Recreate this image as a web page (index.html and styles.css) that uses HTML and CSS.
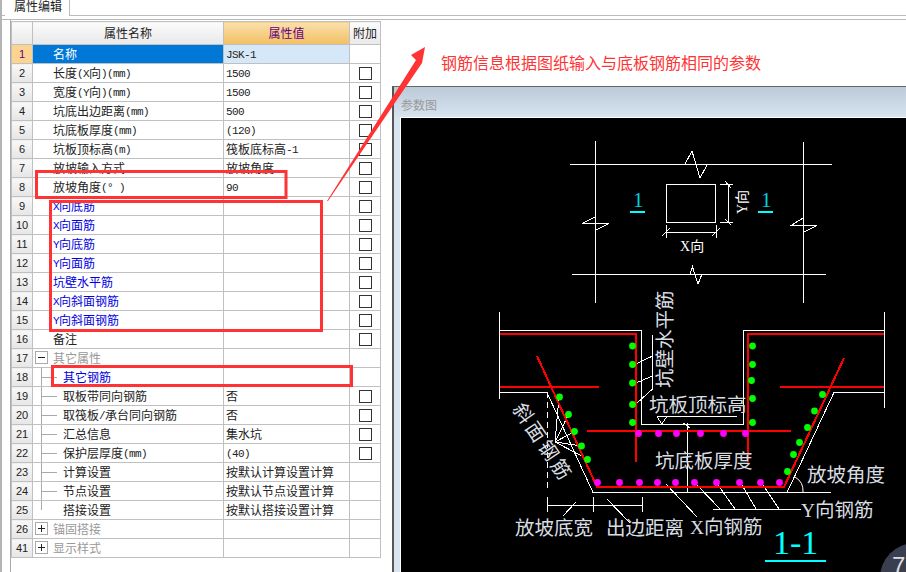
FILE: index.html
```html
<!DOCTYPE html>
<html lang="zh-CN">
<head>
    <meta charset="UTF-8">
    <title>属性编辑</title>
    <link rel="stylesheet" href="styles.css">
</head>
<body>
<div class="window">
    <div class="tabs"><div class="tab">属性编辑</div></div>
    <div class="content">
        <div class="props">
            <table class="grid">
                <colgroup><col class="c-idx"><col class="c-name"><col class="c-val"><col class="c-add"></colgroup>
                <tr class="head">
                    <th></th><th>属性名称</th><th class="active">属性值</th><th>附加</th>
                </tr>
                <tr class="selected"><td class="idx">1</td><td class="name">名称</td><td class="val"><span class="lat">JSK-1</span></td><td></td></tr>
                <tr><td class="idx">2</td><td class="name">长度<span class="lat">(X</span>向<span class="lat">)(mm)</span></td><td class="val"><span class="lat">1500</span></td><td class="add"><i class="check"></i></td></tr>
                <tr><td class="idx">3</td><td class="name">宽度<span class="lat">(Y</span>向<span class="lat">)(mm)</span></td><td class="val"><span class="lat">1500</span></td><td class="add"><i class="check"></i></td></tr>
                <tr><td class="idx">4</td><td class="name">坑底出边距离<span class="lat">(mm)</span></td><td class="val"><span class="lat">500</span></td><td class="add"><i class="check"></i></td></tr>
                <tr><td class="idx">5</td><td class="name">坑底板厚度<span class="lat">(mm)</span></td><td class="val"><span class="lat">(120)</span></td><td class="add"><i class="check"></i></td></tr>
                <tr><td class="idx">6</td><td class="name">坑板顶标高<span class="lat">(m)</span></td><td class="val">筏板底标高<span class="lat">-1</span></td><td class="add"><i class="check"></i></td></tr>
                <tr><td class="idx">7</td><td class="name">放坡输入方式</td><td class="val">放坡角度</td><td class="add"><i class="check"></i></td></tr>
                <tr><td class="idx">8</td><td class="name">放坡角度<span class="lat">(° )</span></td><td class="val"><span class="lat">90</span></td><td class="add"><i class="check"></i></td></tr>
                <tr><td class="idx">9</td><td class="name link"><span class="lat">X</span>向底筋</td><td class="val"></td><td class="add"><i class="check"></i></td></tr>
                <tr><td class="idx">10</td><td class="name link"><span class="lat">X</span>向面筋</td><td class="val"></td><td class="add"><i class="check"></i></td></tr>
                <tr><td class="idx">11</td><td class="name link"><span class="lat">Y</span>向底筋</td><td class="val"></td><td class="add"><i class="check"></i></td></tr>
                <tr><td class="idx">12</td><td class="name link"><span class="lat">Y</span>向面筋</td><td class="val"></td><td class="add"><i class="check"></i></td></tr>
                <tr><td class="idx">13</td><td class="name link">坑壁水平筋</td><td class="val"></td><td class="add"><i class="check"></i></td></tr>
                <tr><td class="idx">14</td><td class="name link"><span class="lat">X</span>向斜面钢筋</td><td class="val"></td><td class="add"><i class="check"></i></td></tr>
                <tr><td class="idx">15</td><td class="name link"><span class="lat">Y</span>向斜面钢筋</td><td class="val"></td><td class="add"><i class="check"></i></td></tr>
                <tr><td class="idx">16</td><td class="name">备注</td><td class="val"></td><td class="add"><i class="check"></i></td></tr>
                <tr><td class="idx">17</td><td class="name group"><i class="toggle minus"></i>其它属性</td><td class="val"></td><td></td></tr>
                <tr><td class="idx">18</td><td class="name child link">其它钢筋</td><td class="val"></td><td></td></tr>
                <tr><td class="idx">19</td><td class="name child">取板带同向钢筋</td><td class="val">否</td><td class="add"><i class="check"></i></td></tr>
                <tr><td class="idx">20</td><td class="name child">取筏板<span class="lat">/</span>承台同向钢筋</td><td class="val">否</td><td class="add"><i class="check"></i></td></tr>
                <tr><td class="idx">21</td><td class="name child">汇总信息</td><td class="val">集水坑</td><td class="add"><i class="check"></i></td></tr>
                <tr><td class="idx">22</td><td class="name child">保护层厚度<span class="lat">(mm)</span></td><td class="val"><span class="lat">(40)</span></td><td class="add"><i class="check"></i></td></tr>
                <tr><td class="idx">23</td><td class="name child">计算设置</td><td class="val">按默认计算设置计算</td><td></td></tr>
                <tr><td class="idx">24</td><td class="name child">节点设置</td><td class="val">按默认节点设置计算</td><td></td></tr>
                <tr><td class="idx">25</td><td class="name child last">搭接设置</td><td class="val">按默认搭接设置计算</td><td></td></tr>
                <tr><td class="idx">26</td><td class="name group"><i class="toggle plus"></i>锚固搭接</td><td class="val"></td><td></td></tr>
                <tr><td class="idx">41</td><td class="name group"><i class="toggle plus"></i>显示样式</td><td class="val"></td><td></td></tr>
            </table>
        </div>
        <div class="side">
            <p class="note">钢筋信息根据图纸输入与底板钢筋相同的参数</p>
            <div class="params">
                <h4>参数图</h4>
                <div class="canvas">
                    <svg class="drawing" width="505" height="454" viewBox="401 118 505 454">
                        <!-- plan view -->
                        <g class="ln">
                            <path d="M595.5 141V303M803.5 142V303M570 164.5H832M572 274.5H826"/>
                            <path d="M685 164L692 151L700 178L707 165M690 274L692.5 267L698 284L702 274"/>
                            <path d="M595 217L582 223.5H609L596 230M803 218L791 225.5H817L804 232"/>
                            <rect x="666.5" y="184.5" width="49" height="38"/>
                            <path d="M666.5 232.5H716M666.5 225V238M716 225V238M662 236L670 228M712 236L720 228"/>
                            <path d="M728.5 184V222M720 184.5H733M720 222.5H733M725 181L731 188M725 219L731 225"/>
                        </g>
                        <text class="t-small" x="680" y="251"><tspan class="t-lat">X</tspan>向</text>
                        <text class="t-small" transform="translate(747 214) rotate(-90)"><tspan class="t-lat">Y</tspan>向</text>
                        <text class="t-one" x="633" y="207">1</text>
                        <text class="t-one" x="761" y="207">1</text>
                        <path class="cy" d="M630 212H645M758 212H773"/>

                        <!-- pit outline -->
                        <g class="ln">
                            <path d="M499.5 312V399M884.5 312V408"/>
                            <path d="M500 330.5H641.5V424.5H743.5V330.5H884"/>
                            <path d="M500 392.5H547L593 492.5H831M787 492.5L834 392.5H884"/>
                            <path class="dash" d="M547.5 392V490"/>
                            <path d="M636 364L652.5 356M636 383L652.5 376M636 404L652.5 389M652.5 335V389"/>
                            <path d="M657 416.5H737M657 416.5H667L661.7 424L657 416.5"/>
                            <path d="M687.5 423V492M683 423L690 428"/>
                            <path d="M555 442L559 397M555 442L568.5 414.5M555 442L574.5 431.5M555 442L581 446M555 442L587.5 459"/>
                            <path d="M547 505.5H642M547.5 497V512M593.5 497V512M642.5 497V512"/>
                            <path d="M576 502L563 516M607 499L630 523"/>
                            <path d="M713 509.5H801M697 485L720 509M718 485L735 509M742 485L756 509M763 485L779 509M666 484L697 517"/>
                            <path class="arc" d="M795 477A16 16 0 0 1 803 492"/>
                        </g>

                        <!-- rebar -->
                        <g class="rb">
                            <path d="M500 334H636V462M748 462V334H884"/>
                            <path d="M500 387H599M780 387H884M587 431H791"/>
                            <path d="M537 356L597 487H784L844 358"/>
                        </g>
                        <g class="gd">
                            <circle cx="632.5" cy="346" r="3.4"/><circle cx="632.5" cy="364.5" r="3.4"/><circle cx="632.5" cy="383" r="3.4"/><circle cx="632.5" cy="404.5" r="3.4"/><circle cx="632.5" cy="422.5" r="3.4"/>
                            <circle cx="752.5" cy="346" r="3.4"/><circle cx="752.5" cy="364.5" r="3.4"/><circle cx="751.5" cy="380.5" r="3.4"/><circle cx="752.5" cy="398.5" r="3.4"/><circle cx="752.5" cy="422.5" r="3.4"/>
                            <circle cx="559.5" cy="397" r="3.4"/><circle cx="568.5" cy="414.5" r="3.4"/><circle cx="574.5" cy="431.5" r="3.4"/><circle cx="581.5" cy="446" r="3.4"/><circle cx="587.5" cy="459.5" r="3.4"/>
                            <circle cx="822.5" cy="394.5" r="3.4"/><circle cx="814.5" cy="411" r="3.4"/><circle cx="807.5" cy="427.5" r="3.4"/><circle cx="799.5" cy="442.5" r="3.4"/><circle cx="793.5" cy="454.5" r="3.4"/><circle cx="787.5" cy="471.5" r="3.4"/>
                        </g>
                        <g class="mg">
                            <circle cx="638.5" cy="433.5" r="3.4"/><circle cx="658.5" cy="433.5" r="3.4"/><circle cx="676.5" cy="433.5" r="3.4"/><circle cx="700.5" cy="433.5" r="3.4"/><circle cx="723.5" cy="433.5" r="3.4"/><circle cx="745.5" cy="433.5" r="3.4"/>
                            <circle cx="597.5" cy="482.5" r="3.4"/><circle cx="619.5" cy="482.5" r="3.4"/><circle cx="639.5" cy="482.5" r="3.4"/><circle cx="657.5" cy="482.5" r="3.4"/><circle cx="675.5" cy="482.5" r="3.4"/><circle cx="694.5" cy="482.5" r="3.4"/><circle cx="716.5" cy="482.5" r="3.4"/><circle cx="739.5" cy="482.5" r="3.4"/><circle cx="760.5" cy="482.5" r="3.4"/><circle cx="779.5" cy="482.5" r="3.4"/>
                        </g>

                        <!-- labels -->
                        <text class="t-cad" transform="translate(672 388) rotate(-90)">坑壁水平筋</text>
                        <text class="t-cad" x="649" y="412">坑板顶标高</text>
                        <text class="t-cad" x="655" y="468">坑底板厚度</text>
                        <text class="t-cad t-slant" transform="translate(512 409) rotate(56)">斜面钢筋</text>
                        <text class="t-cad" x="515" y="535">放坡底宽</text>
                        <text class="t-cad" x="606" y="535">出边距离</text>
                        <text class="t-cad" x="690" y="534"><tspan class="t-lat">X</tspan>向钢筋</text>
                        <text class="t-cad" x="801" y="517"><tspan class="t-lat">Y</tspan>向钢筋</text>
                        <text class="t-cad" x="807" y="482">放坡角度</text>
                        <text class="t-title" x="773" y="554">1-1</text>
                        <path class="cy" d="M765 561H826"/>
                    </svg>
                </div>
            </div>
        </div>
    </div>

    <!-- red annotations drawn over the screen -->
    <svg class="marks" width="906" height="572" viewBox="0 0 906 572">
        <rect x="36.5" y="171.5" width="249.5" height="26"/>
        <rect x="50.5" y="201.5" width="271" height="129"/>
        <rect x="52.5" y="366.5" width="299" height="19"/>
        <polygon class="arrow" points="425,47 411,55 416,60 327,201 328,201 422,63"/>
    </svg>

    <div class="badge">7</div>
</div>
</body>
</html>
```

FILE: styles.css
```css
* {
    box-sizing: border-box;
}
body {
    margin: 0;
    font-family: "Noto Sans CJK SC", "Liberation Sans", sans-serif;
    font-size: 12px;
    color: #222;
    background: #fff;
}
.window {
    position: relative;
    width: 906px;
    height: 572px;
    overflow: hidden;
    border-left: 2px solid #b4b4b4;
}

/* tab strip */
.tabs {
    height: 19px;
    padding-left: 3px;
    background: linear-gradient(#fff 15px, #bbb 15px, #bbb 16px, #fff 16px);
}
.tab {
    width: 65px;
    height: 16px;
    padding-left: 9px;
    line-height: 12px;
    font-size: 12px;
    background: #fff;
    border-right: 1px solid #bbb;
}

.content {
    display: flex;
    height: 553px;
    border-top: 1px solid #b8b8b8;
}

/* property grid */
.props {
    width: 382px;
    flex: none;
    margin-left: 8px;
    padding: 1px 0 0 0;
    border-left: 1px solid #aaa;
}
.grid {
    width: 369px;
    table-layout: fixed;
    border-collapse: collapse;
}
.c-idx { width: 21px; }
.c-name { width: 191px; }
.c-val { width: 126px; }
.c-add { width: 31px; }
.grid th, .grid td {
    height: 19px;
    padding: 0;
    border: 1px solid #c0c0c0;
    font-weight: normal;
    line-height: 16px;
    white-space: nowrap;
    overflow: hidden;
}
.grid th {
    height: 23px;
    text-align: center;
    background: linear-gradient(#fbfbfb, #e9e9e9);
}
.grid th.active {
    color: #660080;
    background: linear-gradient(#f9e0ad, #f3bf62);
}
.idx {
    text-align: center;
    font-family: "Liberation Sans", sans-serif;
    font-size: 11px;
    background: linear-gradient(#f8f8f8, #e6e6e6);
}
.name {
    position: relative;
    padding-left: 20px !important;
}
.val {
    padding-left: 2px !important;
}
.add {
    text-align: center;
    line-height: 0 !important;
}
.lat {
    font-family: "Liberation Mono", monospace;
    font-size: 11px;
    letter-spacing: -0.6px;
    vertical-align: 1px;
}
.link {
    color: #0000e0;
}
.group {
    padding-left: 20px !important;
    color: #999;
}
.child {
    padding-left: 30px !important;
}
.child::before {
    content: "";
    position: absolute;
    left: 8px;
    top: 0;
    bottom: 0;
    width: 15px;
    border-left: 1px solid #aaa;
    background: linear-gradient(#aaa, #aaa) no-repeat 0 9px / 15px 1px;
}
.child.last::before {
    bottom: 9px;
}
.selected .idx {
    color: #660080;
    background: #fbd492;
}
.selected .name {
    color: #fff;
    background: #0078d7;
}
.selected .val {
    background: #d6e8f7;
}
.check {
    display: inline-block;
    width: 13px;
    height: 13px;
    border: 1px solid #333;
    background: #fff;
}
.toggle {
    position: absolute;
    left: 2px;
    top: 2px;
    width: 13px;
    height: 13px;
    border: 1px solid #aaa;
    background: linear-gradient(#222, #222) no-repeat center / 7px 1px;
}
.toggle.plus {
    background:
        linear-gradient(#222, #222) no-repeat center / 7px 1px,
        linear-gradient(#222, #222) no-repeat center / 1px 7px;
}

/* right side */
.side {
    flex: 1;
    min-width: 0;
    display: flex;
    flex-direction: column;
}
.note {
    height: 66px;
    margin: 0;
    padding: 30px 0 0 49px;
    font-size: 16px;
    line-height: 24px;
    color: #f33;
}
.params {
    flex: 1;
    min-height: 0;
    padding-left: 6px;
    display: flex;
    flex-direction: column;
    border-left: 2px solid #555;
    border-top: 1px solid #666;
    background: linear-gradient(#bccbd9, #d8e4f0 31px);
}
.params h4 {
    height: 30px;
    margin: 0;
    padding: 11px 0 0 1px;
    font-weight: normal;
    font-size: 12px;
    line-height: 14px;
    color: #999;
}
.canvas {
    flex: 1;
    min-height: 0;
    border-top: 1px solid #fff;
    border-left: 1px solid #fff;
    background: #000;
}
.drawing {
    display: block;
    shape-rendering: crispEdges;
}
.ln path, .ln rect {
    fill: none;
    stroke: #fff;
    stroke-width: 1;
}
.ln .dash {
    stroke-dasharray: 6 4;
}
.ln .arc {
    shape-rendering: auto;
}
.rb path {
    fill: none;
    stroke: #f00;
    stroke-width: 2;
}
.gd circle, .mg circle {
    shape-rendering: auto;
}
.gd circle {
    fill: #0f0;
}
.mg circle {
    fill: #f0f;
}
.cy {
    fill: none;
    stroke: #0ff;
    stroke-width: 2;
}
.t-cad {
    font-size: 19.5px;
    fill: #d8dde2;
}
.t-slant {
    letter-spacing: 3px;
}
.t-lat {
    font-family: "Liberation Serif", serif;
}
.t-small {
    font-size: 14px;
    fill: #fff;
}
.t-one {
    font-family: "Liberation Serif", serif;
    font-size: 21px;
    fill: #00d0e0;
}
.t-title {
    font-family: "Liberation Serif", serif;
    font-size: 34px;
    fill: #0ff;
}

/* overlays */
.marks {
    position: absolute;
    left: -2px;
    top: 0;
}
.marks rect {
    fill: none;
    stroke: #f33;
    stroke-width: 3;
}
.marks .arrow {
    fill: #f33;
}
.badge {
    position: absolute;
    left: 878px;
    top: 543px;
    width: 70px;
    height: 70px;
    padding: 11px 0 0 12px;
    border-radius: 50%;
    background: #3a3f4f;
    color: #ddd;
    font-family: "Liberation Sans", sans-serif;
    font-size: 24px;
    line-height: 24px;
}
```
